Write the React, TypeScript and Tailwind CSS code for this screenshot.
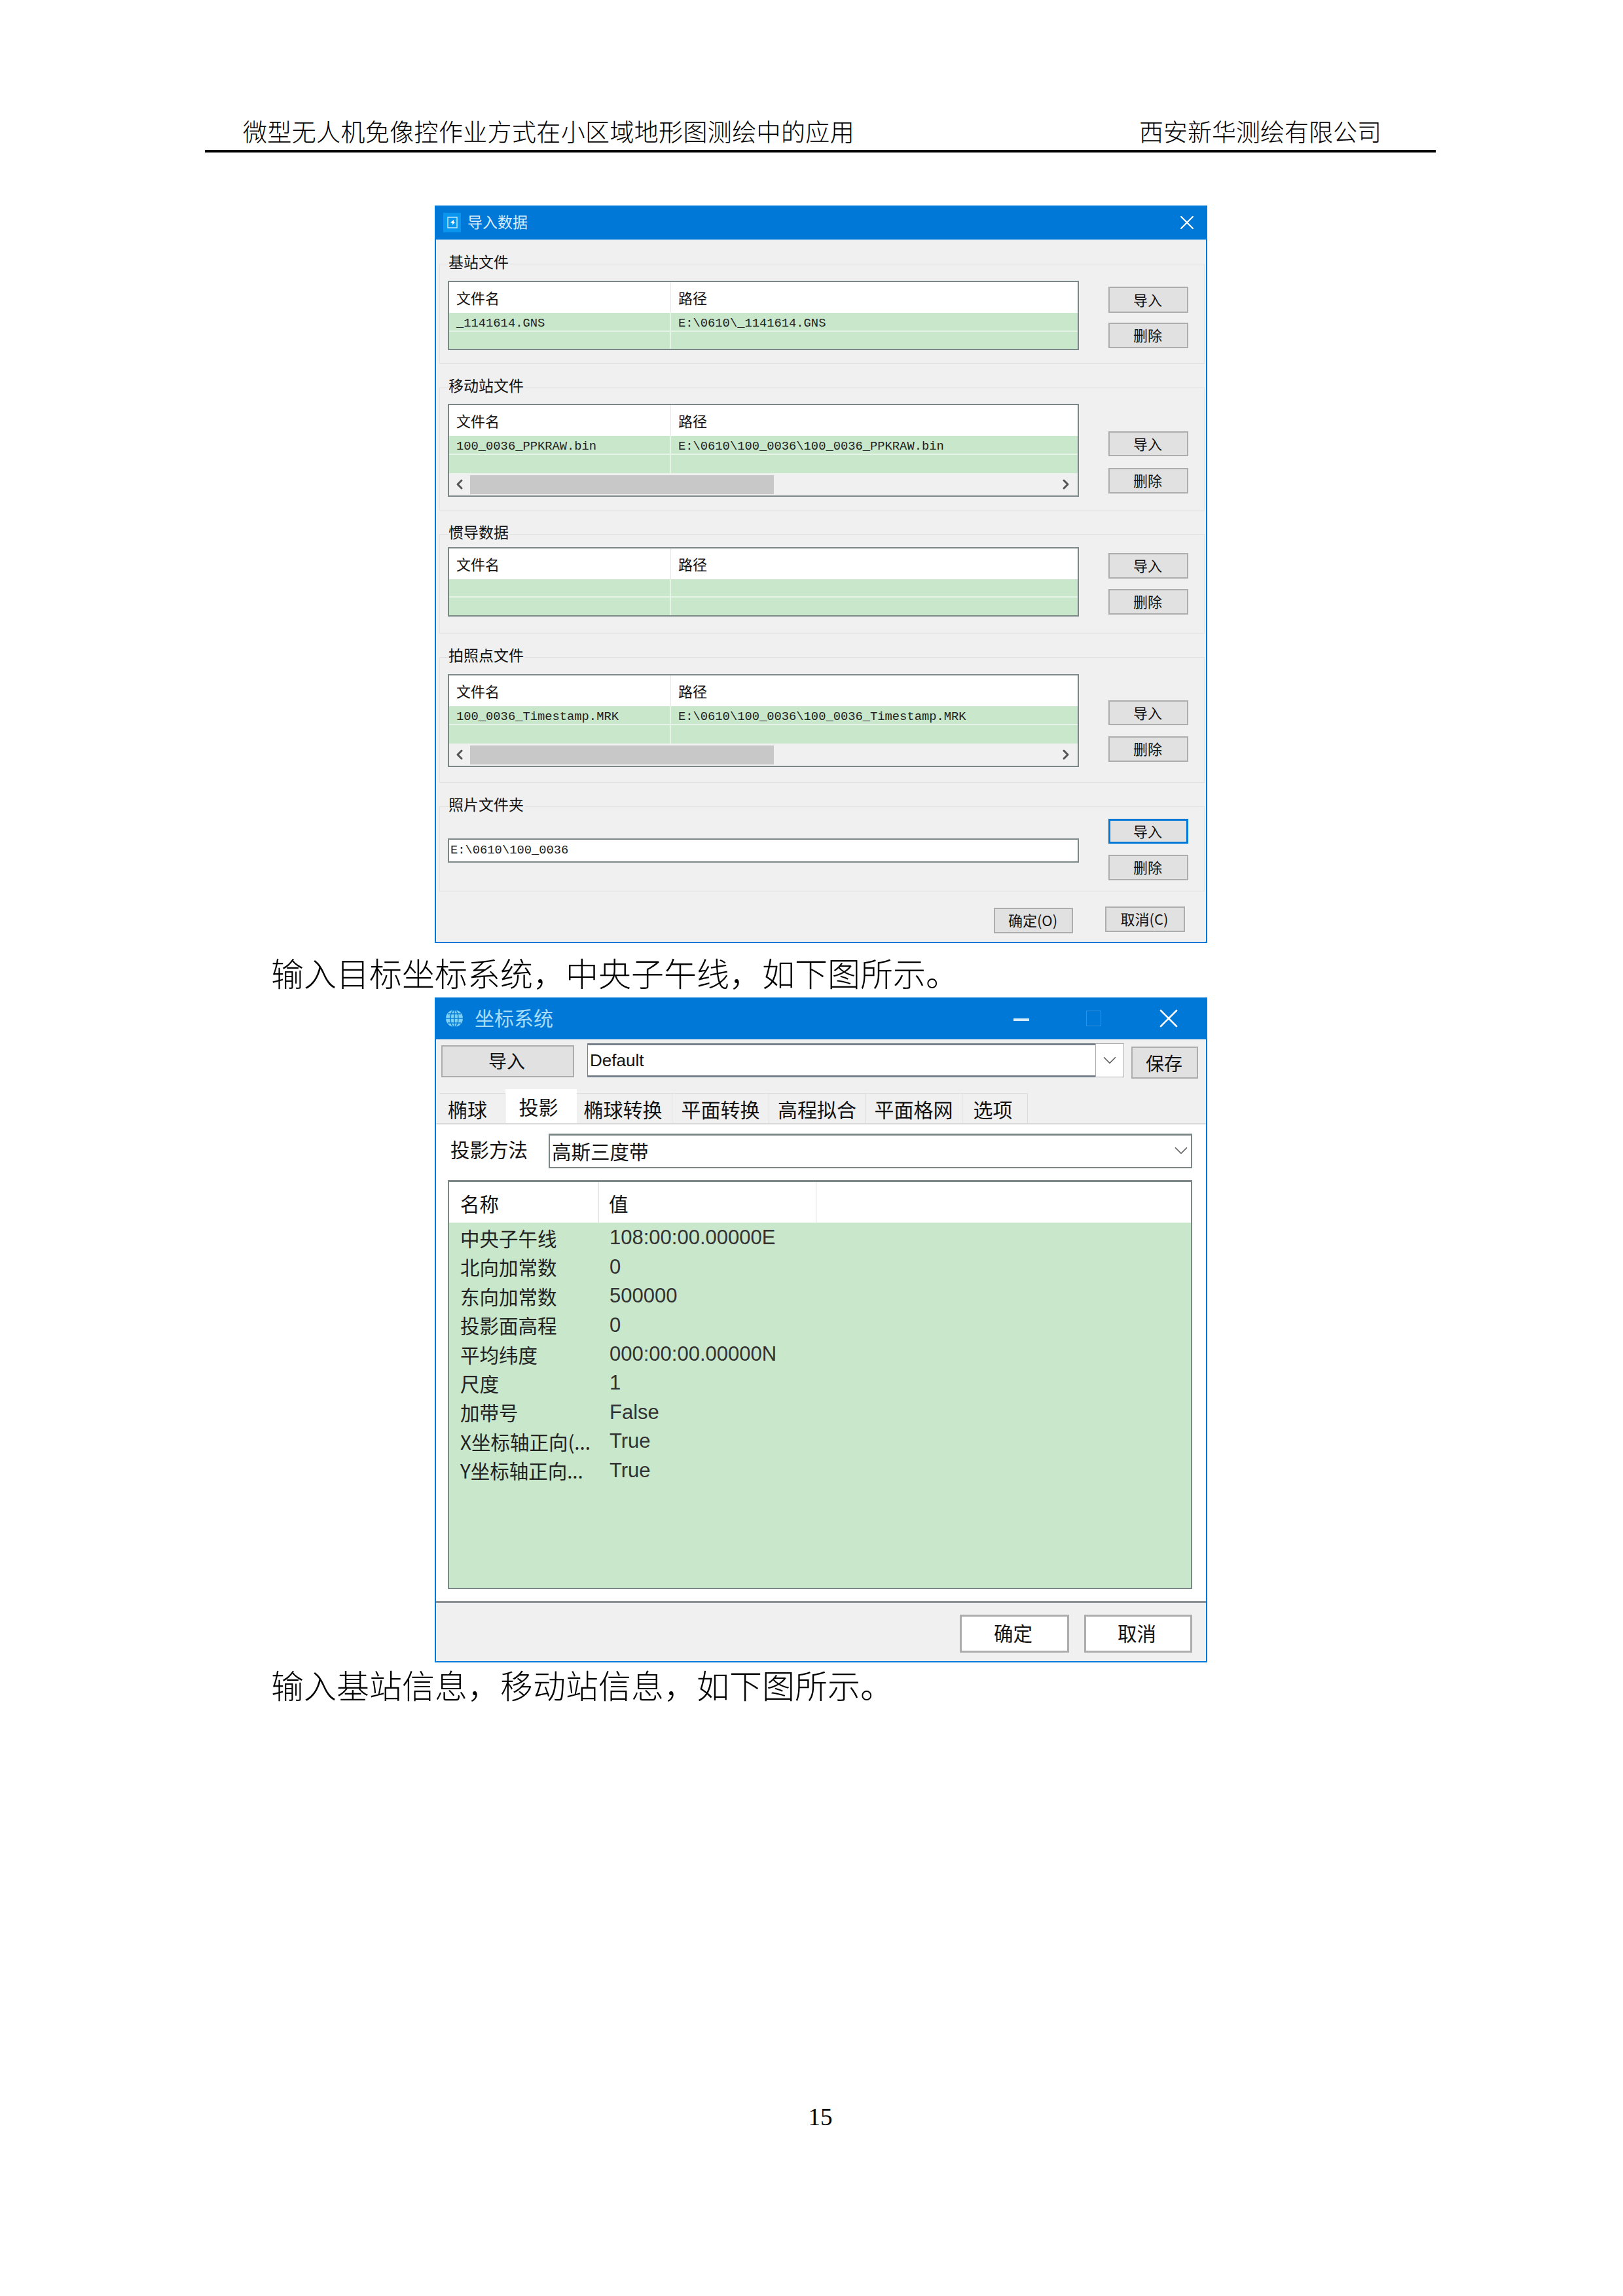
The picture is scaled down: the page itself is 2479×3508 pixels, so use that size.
import { ChevronDown, ChevronLeft, ChevronRight, X } from "lucide-react";

const GROUPS = [
  {
    label: "基站文件",
    box: "mt-[37px] h-[153px]",
    pad: "pt-[25px]",
    table: "h-[106px]",
    rows: ["h-[29px]", "h-[27px]"],
    file: "_1141614.GNS",
    path: "E:\\0610\\_1141614.GNS",
    scroll: false,
    btnPad: "pt-[34px]",
    btnA: "h-[40px]",
    gap: "gap-[15px]",
    btnB: "h-[39px]",
  },
  {
    label: "移动站文件",
    box: "mt-[36px] h-[188px]",
    pad: "pt-[24px]",
    table: "h-[142px]",
    rows: ["h-[29px]", "h-[28px]"],
    file: "100_0036_PPKRAW.bin",
    path: "E:\\0610\\100_0036\\100_0036_PPKRAW.bin",
    scroll: true,
    btnPad: "pt-[66px]",
    btnA: "h-[38px]",
    gap: "gap-[18px]",
    btnB: "h-[39px]",
  },
  {
    label: "惯导数据",
    box: "mt-[36px] h-[152px]",
    pad: "pt-[19px]",
    table: "h-[106px]",
    rows: ["h-[28px]", "h-[28px]"],
    file: "",
    path: "",
    scroll: false,
    btnPad: "pt-[28px]",
    btnA: "h-[39px]",
    gap: "gap-[16px]",
    btnB: "h-[39px]",
  },
  {
    label: "拍照点文件",
    box: "mt-[36px] h-[192px]",
    pad: "pt-[25px]",
    table: "h-[142px]",
    rows: ["h-[29px]", "h-[28px]"],
    file: "100_0036_Timestamp.MRK",
    path: "E:\\0610\\100_0036\\100_0036_Timestamp.MRK",
    scroll: true,
    btnPad: "pt-[65px]",
    btnA: "h-[38px]",
    gap: "gap-[17px]",
    btnB: "h-[39px]",
  },
];

const TABS = [
  { name: "椭球", cls: "w-[101px] pr-[14px]" },
  { name: "投影", cls: "w-[109px] pr-[8px]", active: true },
  { name: "椭球转换", cls: "w-[146px] pr-[4px]" },
  { name: "平面转换", cls: "w-[148px]" },
  { name: "高程拟合", cls: "w-[147px]" },
  { name: "平面格网", cls: "w-[148px]" },
  { name: "选项", cls: "w-[100px] pr-[6px]" },
];

const PARAMS = [
  ["中央子午线", "108:00:00.00000E"],
  ["北向加常数", "0"],
  ["东向加常数", "500000"],
  ["投影面高程", "0"],
  ["平均纬度", "000:00:00.00000N"],
  ["尺度", "1"],
  ["加带号", "False"],
  ["X坐标轴正向(...", "True"],
  ["Y坐标轴正向...", "True"],
];

function Btn({ text, cls }: { text: string; cls: string }) {
  return (
    <div className={`flex items-center justify-center pb-[2px] pr-[2px] bg-[#e1e1e1] border-2 border-[#adadad] text-[22px] text-[#111] ${cls}`}>
      {text}
    </div>
  );
}

function ScrollBar() {
  return (
    <div className="flex items-center h-[34px] bg-[#f0f0f0]">
      <div className="w-[32px] flex justify-center">
        <ChevronLeft size={24} strokeWidth={3} className="text-[#555]" />
      </div>
      <div className="w-[464px] h-[29px] bg-[#c8c8c8]" />
      <div className="flex-1" />
      <div className="w-[36px] flex justify-center">
        <ChevronRight size={24} strokeWidth={3} className="text-[#555]" />
      </div>
    </div>
  );
}

function FileTable({ g }: { g: (typeof GROUPS)[number] }) {
  return (
    <div className={`w-[964px] flex flex-col border-2 border-[#7c8888] bg-white ${g.table}`}>
      <div className="grid grid-cols-[339px_1fr] h-[47px] shrink-0 text-[22px] text-[#111]">
        <div className="pl-[11px] flex items-center border-r border-[#e6e6e6]">文件名</div>
        <div className="pl-[11px] flex items-center">路径</div>
      </div>
      <div className={`grid grid-cols-[339px_1fr] bg-[#c8e7cb] border-b-2 border-[#e6f4e7] shrink-0 font-['Liberation_Mono','Noto_Sans_CJK_SC',monospace] text-[18.8px] text-[#222] ${g.rows[0]}`}>
        <div className="pl-[11px] pt-[2px] flex items-center border-r-2 border-[#e6f4e7] whitespace-nowrap">{g.file}</div>
        <div className="pl-[11px] pt-[2px] flex items-center whitespace-nowrap">{g.path}</div>
      </div>
      <div className={`grid grid-cols-[339px_1fr] bg-[#c8e7cb] ${g.scroll ? g.rows[1] : "flex-1"}`}>
        <div className="border-r-2 border-[#e6f4e7]" />
        <div />
      </div>
      {g.scroll && <ScrollBar />}
    </div>
  );
}

function Group({ label, box, children }: { label: string; box: string; children: React.ReactNode }) {
  return (
    <div className={`relative ml-[5px] w-[1169px] border border-[#e2e2e2] flex pl-[12px] ${box}`}>
      <span className="absolute -top-[20px] left-[13px] pr-[2px] bg-[#f0f0f0] leading-[30px] text-[23px] text-[#111]">
        {label}
      </span>
      {children}
    </div>
  );
}

function ImportDialog() {
  return (
    <div className="ml-[664px] w-[1180px] mt-[81px] flex flex-col border-x-2 border-b-2 border-[#0078d7] bg-[#f0f0f0]">
      <div className="h-[52px] bg-[#0078d7] flex items-center pl-[11px] pr-[11px]">
        <div className="w-[27px] h-[30px] bg-[#0a96ee] flex items-center justify-center">
          <svg width="16" height="18" viewBox="0 0 16 18">
            <rect x="1" y="1" width="14" height="16" fill="none" stroke="#bfe8ff" strokeWidth="1.5" />
            <path d="M5 9 L10 5 L10 8 L12 8 L8 13 L8 10 Z" fill="#fff" />
          </svg>
        </div>
        <span className="ml-[10px] pb-[3px] text-[23px] text-[#d8ecfb]">导入数据</span>
        <X size={36} strokeWidth={1.4} className="ml-auto text-white" />
      </div>
      {GROUPS.map((g) => (
        <Group key={g.label} label={g.label} box={g.box}>
          <div className={g.pad}>
            <FileTable g={g} />
          </div>
          <div className={`ml-[45px] w-[122px] flex flex-col ${g.gap} ${g.btnPad}`}>
            <Btn text="导入" cls={g.btnA} />
            <Btn text="删除" cls={g.btnB} />
          </div>
        </Group>
      ))}
      <Group label="照片文件夹" box="mt-[36px] h-[130px]">
        <div className="pt-[48px]">
          <div className="w-[964px] h-[37px] border-2 border-[#7c8888] bg-white flex items-center pl-[2px] font-['Liberation_Mono',monospace] text-[18.8px] text-[#222]">
            {"E:\\0610\\100_0036"}
          </div>
        </div>
        <div className="ml-[45px] w-[122px] flex flex-col gap-[17px] pt-[18px]">
          <div className="h-[38px] flex items-center justify-center pb-[2px] pr-[2px] bg-[#e1e1e1] border-[3px] border-[#0078d7] text-[22px] text-[#111]">
            导入
          </div>
          <Btn text="删除" cls="h-[39px]" />
        </div>
      </Group>
      <div className="h-[77px] flex items-start justify-end gap-[49px] pt-[23px] pr-[32px]">
        <Btn text="确定(O)" cls="w-[121px] h-[39px] mt-[2px]" />
        <Btn text="取消(C)" cls="w-[122px] h-[39px]" />
      </div>
    </div>
  );
}

function CoordDialog() {
  return (
    <div className="ml-[664px] w-[1180px] flex flex-col border-x-2 border-b-2 border-[#0078d7] bg-[#f0f0f0]">
      <div className="h-[64px] bg-[#0078d7] flex items-center pl-[13px] pr-[33px]">
        <svg width="30" height="30" viewBox="0 0 30 30" className="shrink-0">
          <circle cx="15" cy="15" r="13" fill="#7fd0f5" />
          <path d="M2 15 H28 M15 2 V28 M5 8 H25 M5 22 H25" stroke="#0a7fd6" strokeWidth="1.5" />
          <ellipse cx="15" cy="15" rx="6" ry="13" fill="none" stroke="#0a7fd6" strokeWidth="1.5" />
        </svg>
        <span className="ml-[16px] pb-[3px] whitespace-nowrap text-[30px] text-[#a9dcf7]">坐标系统</span>
        <div className="ml-auto mt-[4px] w-[24px] h-[4px] bg-[#d6ecfb]" />
        <div className="ml-[87px] w-[23px] h-[24px] border border-[#2f90dc]" />
        <X size={48} strokeWidth={1.3} className="ml-[79px] text-white" />
      </div>

      <div className="h-[78px] flex items-start pl-[8px]">
        <div className="mt-[9px] w-[203px] h-[49px] flex items-center justify-center pb-[3px] pr-[3px] bg-[#e1e1e1] border-2 border-[#adadad] text-[28px] text-[#111]">
          导入
        </div>
        <div className="ml-[20px] mt-[6px] flex h-[52px] bg-white">
          <div className="w-[776px] border-y-[3px] border-l border-[#76808a] flex items-center pl-[3px] font-['Liberation_Sans',sans-serif] text-[26px] text-[#111]">
            Default
          </div>
          <div className="w-[44px] border border-[#adadad] flex items-center justify-center">
            <ChevronDown size={34} strokeWidth={1.1} className="text-[#555]" />
          </div>
        </div>
        <div className="ml-[11px] mt-[11px] w-[102px] h-[49px] flex items-center justify-center pr-[2px] bg-[#e1e1e1] border-2 border-[#adadad] text-[28px] text-[#111]">
          保存
        </div>
      </div>

      <div className="h-[52px] flex items-end pl-[5px] border-b-2 border-[#d9d9d9]">
        {TABS.map((t) =>
          t.active ? (
            <div key={t.name} className={`h-[52px] bg-white flex justify-center pt-[4px] text-[30px] text-[#111] ${t.cls}`}>
              {t.name}
            </div>
          ) : (
            <div key={t.name} className={`h-[46px] border-t border-r border-[#dddddd] flex items-center justify-center pt-[2px] text-[30px] text-[#111] ${t.cls}`}>
              {t.name}
            </div>
          ),
        )}
      </div>

      <div className="bg-white pl-[18px] pr-[21px] pt-[14px] pb-[18px] flex flex-col border-b-[3px] border-[#8a8f93]">
        <div className="flex items-center h-[53px]">
          <span className="ml-[4px] w-[150px] pb-[6px] text-[29.5px] text-[#111] whitespace-nowrap">投影方法</span>
          <div className="flex-1 h-[53px] border-2 border-t-[3px] border-[#7c8888] flex items-center pl-[3px] pb-[2px] text-[29.5px] text-[#111]">
            高斯三度带
            <ChevronDown size={34} strokeWidth={1.1} className="ml-auto -mr-[2px] text-[#555]" />
          </div>
        </div>
        <div className="mt-[18px] h-[625px] border-2 border-t-[3px] border-[#7c8888] flex flex-col">
          <div className="h-[62px] flex shrink-0 bg-white text-[29.5px] text-[#111]">
            <div className="w-[229px] pl-[17px] pt-[2px] flex items-center border-r border-[#dddddd]">名称</div>
            <div className="w-[332px] pl-[15px] pt-[2px] flex items-center border-r border-[#dddddd]">值</div>
          </div>
          <div className="flex-1 bg-[#c8e7cb] pt-[1px] flex flex-col">
            {PARAMS.map(([k, v]) => (
              <div key={k} className="h-[44.4px] flex items-center shrink-0">
                <span className="w-[229px] pl-[17px] whitespace-nowrap text-[29.5px] text-[#222]">{k}</span>
                <span className="pl-[16px] pt-[1px] font-['Liberation_Sans',sans-serif] text-[31px] text-[#333]">{v}</span>
              </div>
            ))}
          </div>
        </div>
      </div>

      <div className="h-[89px] flex justify-end gap-[23px] pt-[18px] pr-[21px]">
        <div className="w-[167px] h-[58px] bg-white border-[3px] border-[#adadad] flex items-center justify-center pb-[3px] pr-[4px] text-[29.5px] text-[#111]">
          确定
        </div>
        <div className="w-[165px] h-[58px] bg-white border-[3px] border-[#adadad] flex items-center justify-center pb-[3px] pr-[4px] text-[29.5px] text-[#111]">
          取消
        </div>
      </div>
    </div>
  );
}

export default function App() {
  return (
    <div className="w-[2479px] h-[3508px] bg-white flex flex-col font-['Noto_Sans_CJK_SC',sans-serif]">
      <div className="ml-[313px] w-[1880px] mt-[175px] pb-[4px] pl-[58px] pr-[83px] flex justify-between border-b-[4px] border-black text-[37px] leading-[50px] text-black font-light">
        <span className="tracking-[0.36px]">微型无人机免像控作业方式在小区域地形图测绘中的应用</span>
        <span>西安新华测绘有限公司</span>
      </div>

      <ImportDialog />
      <p className="ml-[414px] h-[83px] pt-[7px] text-[50px] leading-[75px] text-black font-light">
        输入目标坐标系统，中央子午线，如下图所示。
      </p>
      <CoordDialog />
      <p className="ml-[414px] text-[50px] leading-[66px] text-black font-light">
        输入基站信息，移动站信息，如下图所示。
      </p>

      <div className="mt-auto mb-[252px] text-center ml-[27px] font-['Liberation_Serif',serif] text-[37px] leading-[42px] text-black">
        15
      </div>
    </div>
  );
}
